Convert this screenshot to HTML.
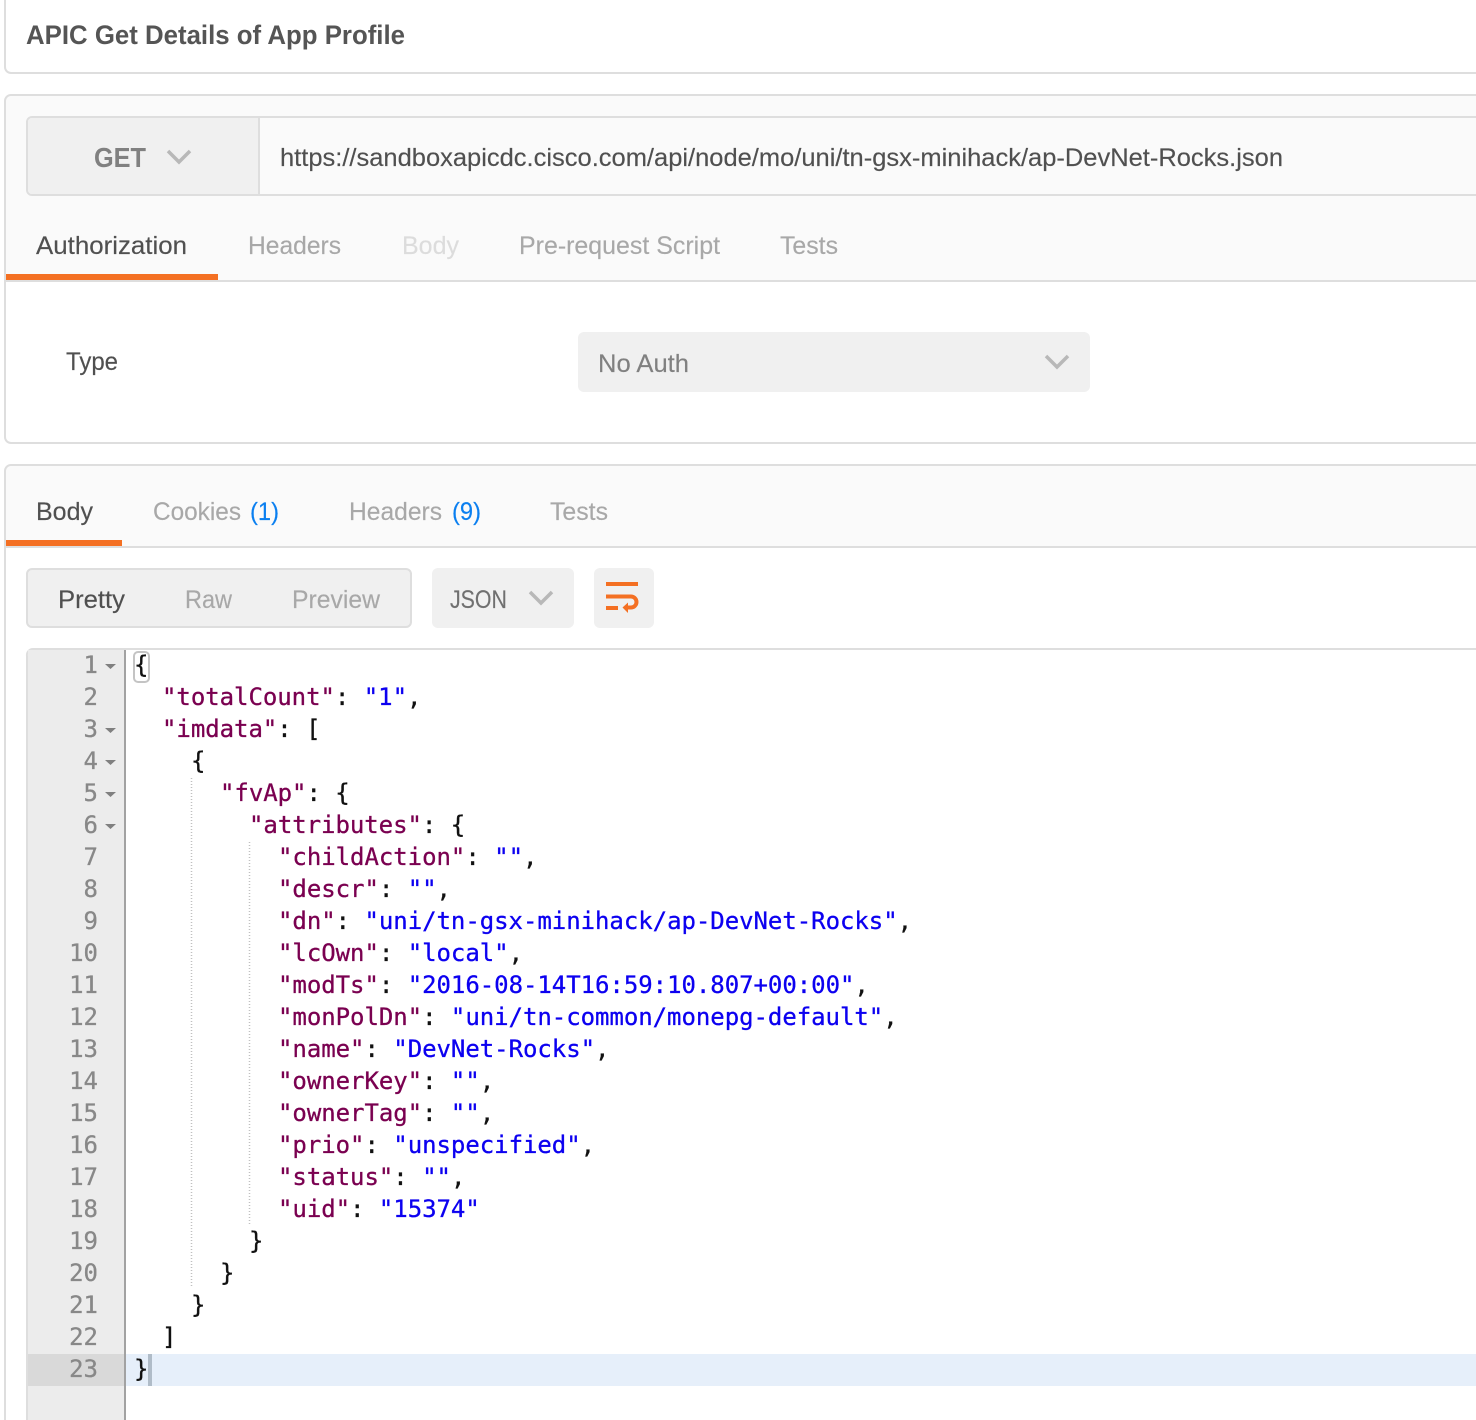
<!DOCTYPE html>
<html><head><meta charset="utf-8"><title>APIC Get Details of App Profile</title>
<style>
html,body{margin:0;padding:0;background:#fff;width:1476px;height:1420px;overflow:hidden}
svg{display:block}
.s{font-family:"Liberation Sans",sans-serif;font-size:25px;stroke-width:.15px}
.m text,.m{font-family:"DejaVu Sans Mono","Liberation Mono",monospace;font-size:24px;fill:#111;stroke:#111;stroke-width:.3px;white-space:pre;letter-spacing:-.04px}
.k{fill:#7a0050;stroke:#7a0050}.v{fill:#0c00f0;stroke:#0c00f0}
.n text{font-family:"DejaVu Sans Mono","Liberation Mono",monospace;font-size:24px;fill:#888;stroke:#888;stroke-width:.3px;text-anchor:end}
</style></head><body>
<svg width="1476" height="1420" viewBox="0 0 1476 1420" xmlns="http://www.w3.org/2000/svg">
<rect width="1476" height="1420" fill="#fff"/>
<!-- title card -->
<rect x="5" y="-10" width="1490" height="83" rx="6" fill="#fff" stroke="#dedede" stroke-width="2"/>
<text class="s" x="26" y="44" font-weight="bold" fill="#555" style="font-size:27px" textLength="379" lengthAdjust="spacingAndGlyphs">APIC Get Details of App Profile</text>
<!-- request card -->
<rect x="5" y="95" width="1490" height="348" rx="6" fill="#fff" stroke="#dedede" stroke-width="2"/>
<path d="M6 102a6 6 0 0 1 6-6H1476V280H6Z" fill="#fafafa"/>
<rect x="6" y="280" width="1470" height="2" fill="#dedede"/>
<rect x="27" y="117" width="1470" height="78" rx="5" fill="#fafafa" stroke="#dedede" stroke-width="2"/>
<path d="M28 122a4 4 0 0 1 4-4H258V194H32a4 4 0 0 1-4-4Z" fill="#f0f0f0"/>
<rect x="258" y="117" width="2" height="78" fill="#dedede"/>
<text class="s" x="94" y="167" font-weight="bold" fill="#808080" style="font-size:28px" textLength="52" lengthAdjust="spacingAndGlyphs">GET</text>
<path d="M168 151l11 11 11-11" fill="none" stroke="#b8b8b8" stroke-width="3.5"/>
<text class="s" x="280" y="166" fill="#505050" stroke="#505050" textLength="1003" lengthAdjust="spacingAndGlyphs">https://sandboxapicdc.cisco.com/api/node/mo/uni/tn-gsx-minihack/ap-DevNet-Rocks.json</text>
<text class="s" x="36" y="254" fill="#505050" stroke="#505050" textLength="151" lengthAdjust="spacingAndGlyphs">Authorization</text>
<rect x="6" y="274" width="212" height="6" fill="#f47023"/>
<text class="s" x="248" y="254" fill="#a8a8a8" stroke="#a8a8a8" textLength="93" lengthAdjust="spacingAndGlyphs">Headers</text>
<text class="s" x="402" y="254" fill="#dcdcdc" stroke="#dcdcdc" textLength="57" lengthAdjust="spacingAndGlyphs">Body</text>
<text class="s" x="519" y="254" fill="#a8a8a8" stroke="#a8a8a8" textLength="201" lengthAdjust="spacingAndGlyphs">Pre-request Script</text>
<text class="s" x="780" y="254" fill="#a8a8a8" stroke="#a8a8a8" textLength="58" lengthAdjust="spacingAndGlyphs">Tests</text>
<text class="s" x="66" y="370" fill="#505050" stroke="#505050" textLength="52" lengthAdjust="spacingAndGlyphs">Type</text>
<rect x="578" y="332" width="512" height="60" rx="6" fill="#f0f0f0"/>
<text class="s" x="598" y="372" fill="#808080" stroke="#808080" textLength="91" lengthAdjust="spacingAndGlyphs">No Auth</text>
<path d="M1046 356l11 11 11-11" fill="none" stroke="#b8b8b8" stroke-width="3.5"/>
<!-- response card -->
<rect x="5" y="465" width="1490" height="1000" rx="6" fill="#fff" stroke="#dedede" stroke-width="2"/>
<path d="M6 472a6 6 0 0 1 6-6H1476V546H6Z" fill="#fafafa"/>
<rect x="6" y="546" width="1470" height="2" fill="#dedede"/>
<text class="s" x="36" y="520" fill="#505050" stroke="#505050" textLength="57" lengthAdjust="spacingAndGlyphs">Body</text>
<rect x="6" y="540" width="116" height="6" fill="#f47023"/>
<text class="s" x="153" y="520" fill="#a8a8a8" stroke="#a8a8a8" textLength="88" lengthAdjust="spacingAndGlyphs">Cookies</text>
<text class="s" x="250" y="520" fill="#0a7ff0" stroke="#0a7ff0" textLength="29" lengthAdjust="spacingAndGlyphs">(1)</text>
<text class="s" x="349" y="520" fill="#a8a8a8" stroke="#a8a8a8" textLength="93" lengthAdjust="spacingAndGlyphs">Headers</text>
<text class="s" x="452" y="520" fill="#0a7ff0" stroke="#0a7ff0" textLength="29" lengthAdjust="spacingAndGlyphs">(9)</text>
<text class="s" x="550" y="520" fill="#a8a8a8" stroke="#a8a8a8" textLength="58" lengthAdjust="spacingAndGlyphs">Tests</text>
<!-- toolbar -->
<rect x="27" y="569" width="384" height="58" rx="5" fill="#f0f0f0" stroke="#dedede" stroke-width="2"/>
<text class="s" x="58" y="608" fill="#505050" stroke="#505050" textLength="67" lengthAdjust="spacingAndGlyphs">Pretty</text>
<text class="s" x="185" y="608" fill="#a8a8a8" stroke="#a8a8a8" textLength="47" lengthAdjust="spacingAndGlyphs">Raw</text>
<text class="s" x="292" y="608" fill="#a8a8a8" stroke="#a8a8a8" textLength="88" lengthAdjust="spacingAndGlyphs">Preview</text>
<rect x="432" y="568" width="142" height="60" rx="6" fill="#f0f0f0"/>
<text class="s" x="450" y="608" fill="#707070" stroke="#707070" textLength="57" lengthAdjust="spacingAndGlyphs">JSON</text>
<path d="M530 592l11 11 11-11" fill="none" stroke="#b8b8b8" stroke-width="3.5"/>
<rect x="594" y="568" width="60" height="60" rx="6" fill="#f0f0f0"/>
<path d="M606 584H638M606 596.500H631a5.500 5.500 0 0 1 0 11H626M606 608H618" fill="none" stroke="#f47023" stroke-width="4"/>
<path d="M622.500 607.500L628 602.500V613Z" fill="#f47023"/>
<!-- editor -->
<path d="M27 1420V656a6 6 0 0 1 6-7H1476" fill="none" stroke="#dedede" stroke-width="2"/>
<rect x="28" y="650" width="96" height="770" fill="#ececec"/>
<rect x="124" y="650" width="2" height="770" fill="#a2a2a2"/>
<rect x="28" y="1354" width="96" height="32" fill="#d9d9d9"/>
<rect x="126" y="1354" width="1350" height="32" fill="#e6effa"/>
<rect x="148" y="1354" width="4" height="32" fill="#b0bcc8"/>
<rect x="134" y="652" width="15" height="30" rx="4" fill="#fff" stroke="#c4c4c4" stroke-width="2"/>
<path d="M191.500 778V1288M249.500 842V1224" stroke="#c0c0c0" stroke-width="1.500" stroke-dasharray="1 2" fill="none"/>
<g fill="#808080">
<path d="M105 664h11l-5.500 5zM105 728h11l-5.500 5zM105 760h11l-5.500 5zM105 792h11l-5.500 5zM105 824h11l-5.500 5z"/>
</g>
<g class="n" transform="translate(0,-1)">
<text x="98" y="674">1</text><text x="98" y="706">2</text><text x="98" y="738">3</text><text x="98" y="770">4</text><text x="98" y="802">5</text><text x="98" y="834">6</text><text x="98" y="866">7</text><text x="98" y="898">8</text><text x="98" y="930">9</text><text x="98" y="962">10</text><text x="98" y="994">11</text><text x="98" y="1026">12</text><text x="98" y="1058">13</text><text x="98" y="1090">14</text><text x="98" y="1122">15</text><text x="98" y="1154">16</text><text x="98" y="1186">17</text><text x="98" y="1218">18</text><text x="98" y="1250">19</text><text x="98" y="1282">20</text><text x="98" y="1314">21</text><text x="98" y="1346">22</text><text x="98" y="1378">23</text>
</g>
<g class="m" transform="translate(-1,-1)">
<text x="135" y="674">{</text>
<text x="163" y="706"><tspan class="k">"totalCount"</tspan>: <tspan class="v">"1"</tspan>,</text>
<text x="163" y="738"><tspan class="k">"imdata"</tspan>: [</text>
<text x="192" y="770">{</text>
<text x="221" y="802"><tspan class="k">"fvAp"</tspan>: {</text>
<text x="250" y="834"><tspan class="k">"attributes"</tspan>: {</text>
<text x="279" y="866"><tspan class="k">"childAction"</tspan>: <tspan class="v">""</tspan>,</text>
<text x="279" y="898"><tspan class="k">"descr"</tspan>: <tspan class="v">""</tspan>,</text>
<text x="279" y="930"><tspan class="k">"dn"</tspan>: <tspan class="v">"uni/tn-gsx-minihack/ap-DevNet-Rocks"</tspan>,</text>
<text x="279" y="962"><tspan class="k">"lcOwn"</tspan>: <tspan class="v">"local"</tspan>,</text>
<text x="279" y="994"><tspan class="k">"modTs"</tspan>: <tspan class="v">"2016-08-14T16:59:10.807+00:00"</tspan>,</text>
<text x="279" y="1026"><tspan class="k">"monPolDn"</tspan>: <tspan class="v">"uni/tn-common/monepg-default"</tspan>,</text>
<text x="279" y="1058"><tspan class="k">"name"</tspan>: <tspan class="v">"DevNet-Rocks"</tspan>,</text>
<text x="279" y="1090"><tspan class="k">"ownerKey"</tspan>: <tspan class="v">""</tspan>,</text>
<text x="279" y="1122"><tspan class="k">"ownerTag"</tspan>: <tspan class="v">""</tspan>,</text>
<text x="279" y="1154"><tspan class="k">"prio"</tspan>: <tspan class="v">"unspecified"</tspan>,</text>
<text x="279" y="1186"><tspan class="k">"status"</tspan>: <tspan class="v">""</tspan>,</text>
<text x="279" y="1218"><tspan class="k">"uid"</tspan>: <tspan class="v">"15374"</tspan></text>
<text x="250" y="1250">}</text>
<text x="221" y="1282">}</text>
<text x="192" y="1314">}</text>
<text x="163" y="1346">]</text>
<text x="135" y="1378">}</text>
</g>
</svg>
</body></html>
